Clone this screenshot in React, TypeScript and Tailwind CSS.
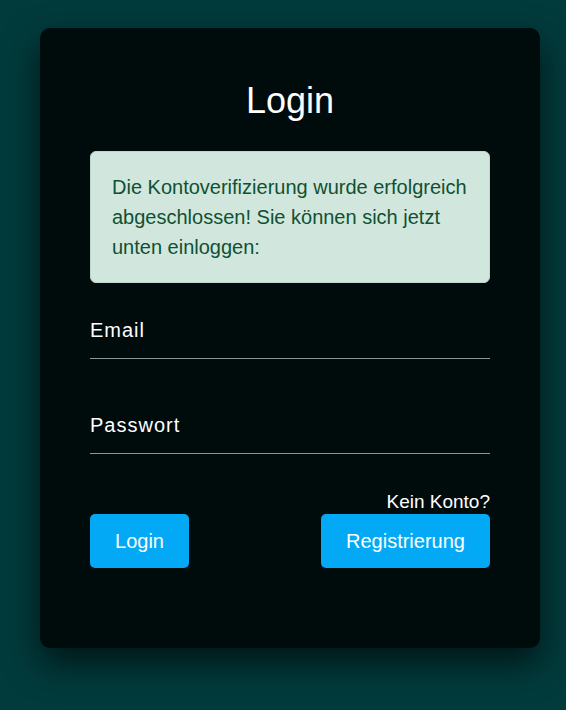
export default function App() {
  return (
    <div className="min-h-screen w-full bg-[#023b3c] pt-[28px] pl-[40px] font-['Liberation_Sans',Arial,sans-serif]">
      <div className="w-[500px] h-[620px] rounded-[10px] bg-[#000b0c] px-[50px] pt-[52px] shadow-[0_15px_35px_rgba(0,0,0,0.65)]">
        <h2 className="text-center text-[36px] leading-[41px] text-white">Login</h2>

        <div className="mt-[30px] rounded-[6px] border border-[#badbcc] bg-[#d1e7dd] pl-[21px] pr-[14px] py-[20px] text-[20px] leading-[30px] text-[#0f5132]">
          Die Kontoverifizierung wurde erfolgreich abgeschlossen! Sie können sich jetzt unten einloggen:
        </div>

        <div className="mt-[36px] border-b border-[#8a9696] pb-[16px]">
          <span className="block text-[20px] leading-[23px] tracking-[1px] text-white">Email</span>
        </div>
        <div className="mt-[55px] border-b border-[#8a9696] pb-[16px]">
          <span className="block text-[20px] leading-[23px] tracking-[1px] text-white">Passwort</span>
        </div>

        <div className="mt-[37px] text-right text-[19px] leading-[22px] text-white">Kein Konto?</div>

        <div className="mt-[1px] flex items-center justify-between">
          <button className="h-[54px] w-[99px] rounded-[5px] bg-[#03a9f4] text-[20px] text-white">Login</button>
          <button className="h-[54px] w-[169px] rounded-[5px] bg-[#03a9f4] text-[20px] text-white">Registrierung</button>
        </div>
      </div>
    </div>
  );
}
